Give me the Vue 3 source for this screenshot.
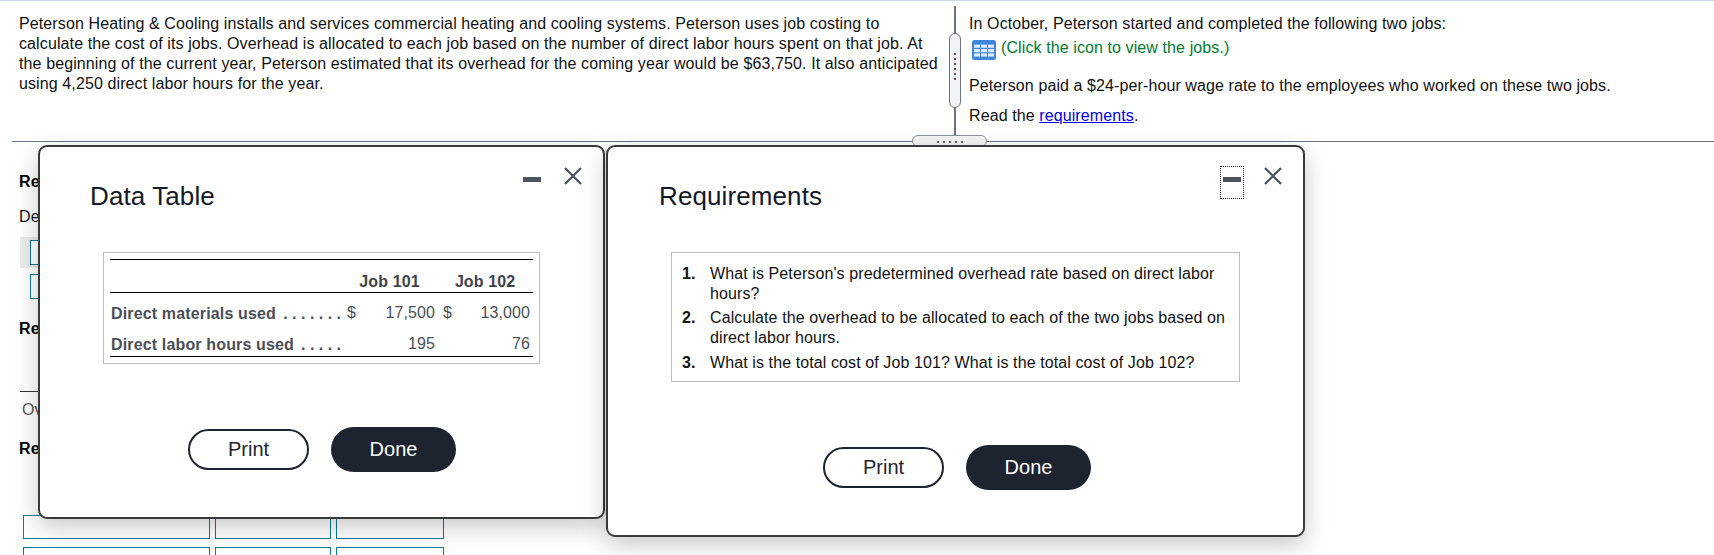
<script setup>
const rows = [
  { label: 'Direct materials used', dots: '. . . . . . .', s1: '$', v1: '17,500', s2: '$', v2: '13,000' },
  { label: 'Direct labor hours used', dots: '. . . . .', s1: '', v1: '195', s2: '', v2: '76' },
]
const reqs = [
  "What is Peterson's predetermined overhead rate based on direct labor hours?",
  'Calculate the overhead to be allocated to each of the two jobs based on direct labor hours.',
  'What is the total cost of Job 101? What is the total cost of Job 102?',
]
</script>

<template>
  <div class="page">
    <div class="top">
      <div class="left-pane">
        Peterson Heating &amp; Cooling installs and services commercial heating and cooling systems. Peterson uses job costing to<br />
        calculate the cost of its jobs. Overhead is allocated to each job based on the number of direct labor hours spent on that job. At<br />
        the beginning of the current year, Peterson estimated that its overhead for the coming year would be $63,750. It also anticipated<br />
        using 4,250 direct labor hours for the year.
      </div>
      <div class="vsplit">
        <div class="vhandle"><span v-for="n in 6" :key="n" class="vdot"></span></div>
      </div>
      <div class="right-pane">
        <p class="r1">In October, Peterson started and completed the following two jobs:</p>
        <p class="r2">
          <svg class="grid-icon" width="24" height="20" viewBox="0 0 24 20">
            <rect width="24" height="20" rx="2.5" fill="#3f86dd" />
            <g fill="#dcebfb">
              <rect x="2" y="4.6" width="6" height="3.2" />
              <rect x="9" y="4.6" width="6" height="3.2" />
              <rect x="16" y="4.6" width="6" height="3.2" />
              <rect x="2" y="9" width="6" height="3.2" />
              <rect x="9" y="9" width="6" height="3.2" />
              <rect x="16" y="9" width="6" height="3.2" />
              <rect x="2" y="13.4" width="6" height="3.2" />
              <rect x="9" y="13.4" width="6" height="3.2" />
              <rect x="16" y="13.4" width="6" height="3.2" />
            </g>
          </svg>
          <span class="green">(Click the icon to view the jobs.)</span>
        </p>
        <p class="r3">Peterson paid a $24-per-hour wage rate to the employees who worked on these two jobs.</p>
        <p class="r4">Read the <a class="link" href="#">requirements</a>.</p>
      </div>
    </div>
    <div class="hsplit">
      <div class="hhandle"><span v-for="n in 5" :key="n" class="hdot"></span></div>
    </div>

    <div class="under">
      <div class="u-re">Re</div>
      <div class="u-de">De</div>
      <div class="u-shade"><span class="tbox"></span></div>
      <div class="u-plain"><span class="tbox"></span></div>
      <div class="u-re u-re2">Re</div>
      <div class="u-rule"></div>
      <div class="u-ov">Ov</div>
      <div class="u-re u-re3">Re</div>
      <div class="u-grid">
        <span></span><span></span><span></span>
        <span></span><span></span><span></span>
      </div>
    </div>

    <section class="modal modal-data">
      <header class="m-head">
        <h2 class="m-title">Data Table</h2>
        <div class="m-tools">
          <span class="min-wrap"><span class="min"></span></span>
          <svg class="close" width="18" height="18" viewBox="0 0 18 18"><path d="M1 1 L17 17 M17 1 L1 17" stroke="#47525e" stroke-width="2.2" fill="none" /></svg>
        </div>
      </header>
      <div class="m-box data-box">
        <table class="jobs">
          <colgroup>
            <col class="c-label" /><col class="c-sym1" /><col class="c-num1" /><col class="c-sym2" /><col class="c-num2" />
          </colgroup>
          <thead>
            <tr>
              <th></th>
              <th colspan="2" class="h1">Job 101</th>
              <th colspan="2" class="h2">Job 102</th>
            </tr>
          </thead>
          <tbody>
            <tr v-for="r in rows" :key="r.label">
              <td class="t-label"><div class="lbl"><b>{{ r.label }}</b><b class="dots">{{ r.dots }}</b></div></td>
              <td class="t-sym1">{{ r.s1 }}</td>
              <td class="t-num1">{{ r.v1 }}</td>
              <td class="t-sym2">{{ r.s2 }}</td>
              <td class="t-num2">{{ r.v2 }}</td>
            </tr>
          </tbody>
        </table>
      </div>
      <footer class="m-foot">
        <button class="btn print">Print</button>
        <button class="btn done">Done</button>
      </footer>
    </section>

    <section class="modal modal-req">
      <header class="m-head">
        <h2 class="m-title">Requirements</h2>
        <div class="m-tools">
          <span class="min-wrap focus"><span class="min"></span></span>
          <svg class="close" width="18" height="18" viewBox="0 0 18 18"><path d="M1 1 L17 17 M17 1 L1 17" stroke="#47525e" stroke-width="2.2" fill="none" /></svg>
        </div>
      </header>
      <div class="m-box req-box">
        <ol class="req-list">
          <li v-for="(q, i) in reqs" :key="i"><b class="n">{{ i + 1 }}.</b><span>{{ q }}</span></li>
        </ol>
      </div>
      <footer class="m-foot">
        <button class="btn print">Print</button>
        <button class="btn done">Done</button>
      </footer>
    </section>
  </div>
</template>

<style>
html, body { margin: 0; background: #fff; overflow: hidden; }
</style>

<style scoped>
.page {
  position: relative;
  width: 1714px;
  height: 555px;
  overflow: hidden;
  background: #fff;
  border-top: 1px solid #ced4e0;
  box-sizing: border-box;
  font-family: "Liberation Sans", Arial, sans-serif;
  font-size: 16px;
  letter-spacing: 0.1px;
  line-height: 20px;
  color: #111;
}
.top { display: flex; height: 140px; }
.left-pane { width: 921px; padding: 13px 0 0 19px; flex: none; white-space: nowrap; letter-spacing: 0.11px; }
.vsplit {
  flex: none;
  width: 2px;
  margin: 5px 0 0 14px;
  background: #6b7480;
  position: relative;
}
.vhandle {
  position: absolute;
  left: -5px;
  top: 27px;
  width: 10px;
  height: 73px;
  border: 1px solid #6b7480;
  border-radius: 6px;
  background: #f3f4f7;
  display: flex;
  flex-direction: column;
  align-items: center;
  box-sizing: content-box;
  gap: 3px;
}
.vdot { width: 2px; height: 2px; background: #6e4a50; flex: none; }
.vdot:first-child { margin-top: 19px; }
.right-pane { padding-left: 13px; }
.right-pane p { margin: 0; }
.r1 { padding-top: 13px; }
.r2 { display: flex; align-items: flex-start; gap: 5px; margin-top: 4px !important; padding-left: 3px; height: 20px; }
.r3 { margin-top: 18px !important; }
.r4 { margin-top: 10px !important; }
.grid-icon { flex: none; margin-top: 2px; }
.green { color: #007a33; }
.link { color: #0000e6; text-decoration: underline; }

.hsplit { height: 1px; margin-left: 12px; background: #6b7480; position: relative; }
.hhandle {
  position: absolute;
  left: 900px;
  top: -6px;
  width: 73px;
  height: 5px;
  border: 1px solid #8a929e;
  border-radius: 6px;
  background: #f3f4f7;
  display: flex;
  justify-content: center;
  align-items: flex-start;
  padding-top: 5px;
  box-sizing: content-box;
  gap: 4px;
}
.hdot { width: 2px; height: 2px; background: #666; }

.under { padding-left: 19px; }
.u-re { font-weight: 700; color: #000; padding-top: 30px; }
.u-de { padding-top: 15px; }
.u-shade {
  margin: 10px 0 0 1px;
  width: 30px;
  height: 31px;
  background: #ebebeb;
  display: flex;
  align-items: center;
  padding-left: 10px;
}
.u-plain { margin: 6px 0 0 11px; height: 25px; display: flex; }
.tbox { display: block; width: 30px; height: 25px; border: 1px solid #0a7a9a; box-sizing: border-box; background: #fff; }
.u-re2 { padding-top: 20px; }
.u-rule { margin: 52px 0 0 1px; width: 40px; height: 1px; background: #333; }
.u-ov { color: #555; padding: 8px 0 0 3px; }
.u-re3 { padding-top: 19px; }
.u-grid {
  display: grid;
  grid-template-columns: 187px 116px 108px;
  grid-auto-rows: 24px;
  gap: 8px 5px;
  margin: 56px 0 0 4px;
}
.u-grid span { border: 1px solid #0a7a9a; box-sizing: border-box; }

.modal {
  position: absolute;
  top: 144px;
  box-sizing: border-box;
  background: #fff;
  border: 2px solid #3a3a3a;
  border-radius: 9px;
  box-shadow: 0 8px 24px rgba(0, 0, 0, 0.22);
  display: flex;
  flex-direction: column;
}
.modal-data { left: 38px; width: 567px; height: 374px; padding: 0 21px 0 50px; z-index: 1; }
.modal-req { left: 606px; width: 699px; height: 392px; padding: 0 21px 0 51px; z-index: 2; }
.m-head { position: relative; height: 105px; flex: none; }
.m-title {
  margin: 0;
  padding-top: 34px;
  font-size: 26px;
  line-height: 30px;
  font-weight: 400;
  color: #14192a;
}
.m-tools {
  position: absolute;
  right: 0;
  top: 19px;
  display: flex;
  align-items: flex-start;
  gap: 20px;
}
.close { flex: none; margin-top: 1px; }
.min-wrap {
  width: 24px;
  height: 33px;
  display: flex;
  justify-content: center;
  box-sizing: border-box;
  padding-top: 11px;
}
.min-wrap.focus { outline: 1px dotted #222; outline-offset: -1px; }
.min { display: block; width: 18px; height: 5px; background: #4d535c; }

.m-box { border: 1px solid #bbb; box-sizing: border-box; flex: none; }
.data-box { width: 437px; height: 112px; margin-left: 13px; padding: 6px; }
.req-box { width: 569px; height: 130px; margin-left: 12px; padding: 11px 10px 0; }

.jobs {
  width: 423px;
  table-layout: fixed;
  border-collapse: collapse;
  border-top: 1px solid #000;
  border-bottom: 1px solid #000;
  color: #4a4f57;
}
.c-label { width: 236px; }
.c-sym1 { width: 22px; }
.c-num1 { width: 67px; }
.c-sym2 { width: 28px; }
.c-num2 { width: 70px; }
.jobs th { font-weight: 700; text-align: center; height: 33px; padding: 11px 0 0; border-bottom: 1px solid #000; box-sizing: border-box; color: #3f444c; }
.jobs th.h1 { padding-right: 2px; }
.jobs th.h2 { padding-left: 2px; }
.jobs td { height: 32px; padding: 10px 0 0; box-sizing: border-box; vertical-align: top; white-space: nowrap; }
.jobs tbody tr:last-child td { padding-top: 9px; }
.jobs tbody td.t-label { padding-top: 11px; }
.jobs tbody tr:last-child td.t-label { padding-top: 10px; }
.jobs td.t-sym1 { padding-left: 1px; }
.jobs td.t-sym2 { padding-left: 8px; }
.jobs td.t-num1 { text-align: right; }
.jobs td.t-num2 { text-align: right; padding-right: 3px; }
.lbl { display: flex; justify-content: space-between; padding: 0 5px 0 1px; }
.lbl b { color: #4a4f57; letter-spacing: 0.15px; }
.lbl b.dots { letter-spacing: 0; }

.req-list { list-style: none; margin: 0; padding: 0; color: #111; }
.req-list li { display: flex; margin-bottom: 4px; }
.req-list li:nth-child(2) { margin-bottom: 5px; }
.n { width: 28px; flex: none; }

.m-foot { flex: 1; display: flex; gap: 22px; align-items: flex-start; }
.modal-data .m-foot { padding-left: 98px; margin-top: 63px; }
.modal-req .m-foot { padding-left: 164px; margin-top: 63px; }
.btn { font-family: inherit; font-size: 20px; line-height: 1; border-radius: 23px; box-sizing: border-box; padding: 0 0 2px; cursor: pointer; }
.print { width: 121px; height: 41px; margin-top: 2px; background: #fff; border: 2.5px solid #1d2430; color: #1d2430; }
.done { width: 125px; height: 45px; background: #1d2430; border: none; color: #fff; }
</style>
